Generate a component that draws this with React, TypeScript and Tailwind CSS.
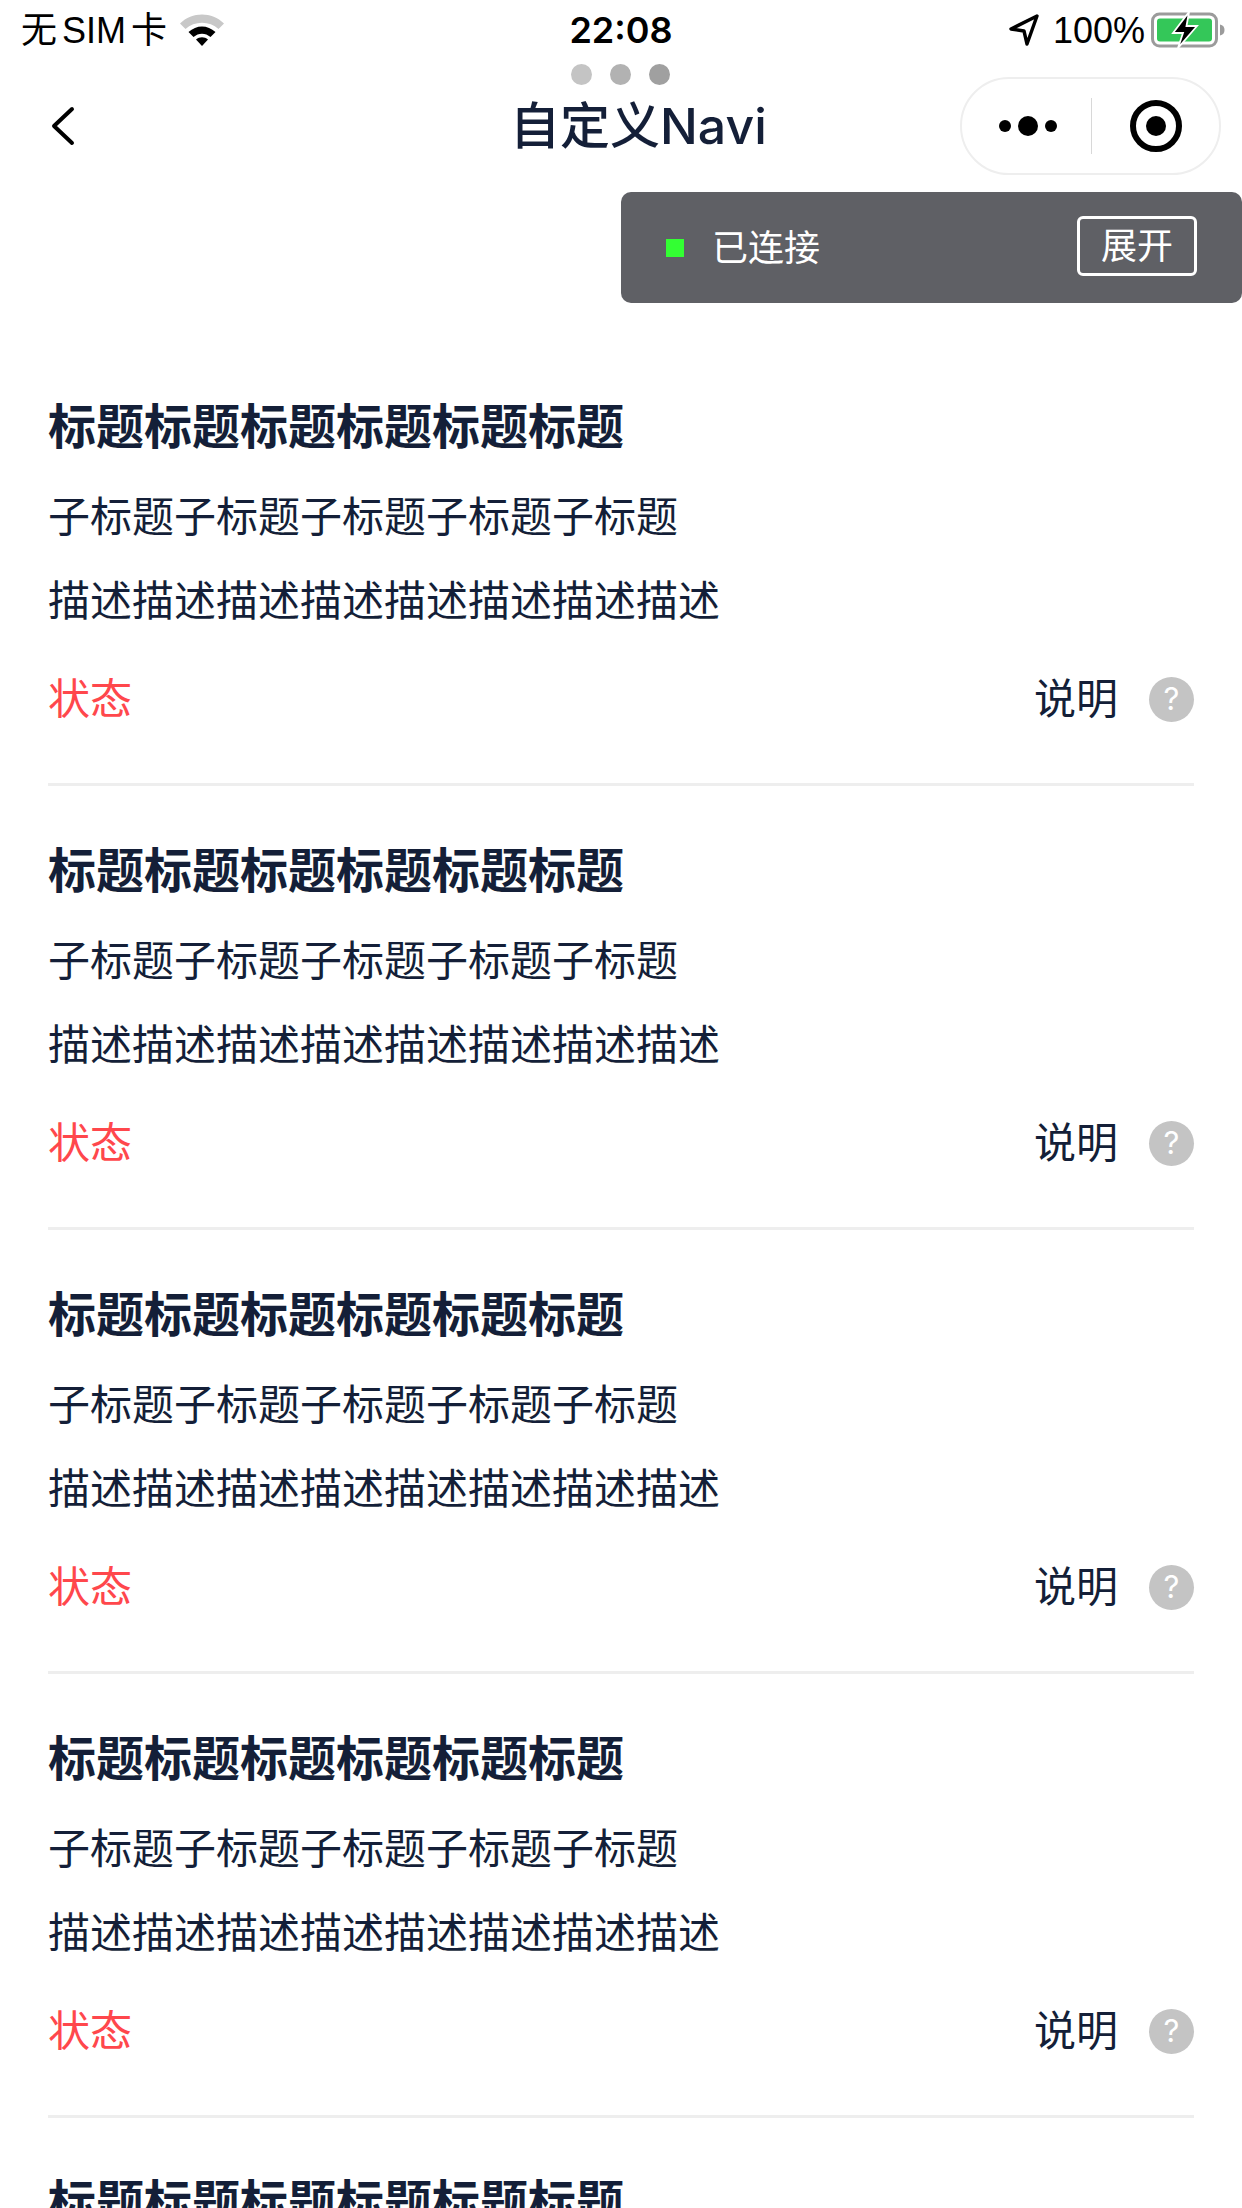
import React from "react";

const fontStack = "font-['Inter','Noto_Sans_CJK_SC',sans-serif]";
const statusFont = "font-['Liberation_Sans','Noto_Sans_CJK_SC',sans-serif]";

function Wifi() {
  return (
    <svg width="46" height="34" viewBox="0 0 46 34">
      <path d="M1 10.5C13 -1.5 33 -1.5 45 10.5L39.5 16C30.5 7.5 15.5 7.5 6.5 16Z" fill="#c8c8c8" />
      <path d="M9.5 19C17.5 11.5 28.5 11.5 36.5 19L31.5 24C26.5 19.5 19.5 19.5 14.5 24Z" fill="#000" />
      <path d="M17 26.5C20.5 23.5 25.5 23.5 29 26.5L23 33Z" fill="#000" />
    </svg>
  );
}

function LocationArrow() {
  return (
    <svg width="32" height="34" viewBox="0 0 32 34" fill="none">
      <path d="M29 3L3 16L16 18L19 31Z" stroke="#000" strokeWidth="3.4" strokeLinejoin="round" />
    </svg>
  );
}

function Battery() {
  return (
    <svg width="74" height="36" viewBox="0 0 74 36">
      <rect x="1.5" y="2" width="64" height="32" rx="7" fill="none" stroke="#9b9b9b" strokeWidth="3" />
      <rect x="6" y="6.5" width="55" height="23" rx="3" fill="#34c759" />
      <path d="M69 12.5C72 13 73.5 15 73.5 18C73.5 21 72 23 69 23.5Z" fill="#9b9b9b" />
      <path d="M38 0L22 21H32L27 36L46 14H35.5Z" fill="#000" stroke="#fff" strokeWidth="1.8" />
    </svg>
  );
}

function Card() {
  return (
    <div className="flex flex-col pt-[55px] pb-[55px] border-b-[3px] border-[#eeeeee]">
      <div className="h-[60px] leading-[60px] text-[48px] font-semibold text-[#141f38]">
        标题标题标题标题标题标题
      </div>
      <div className="mt-[30px] h-[60px] leading-[60px] text-[42px] text-[#141f38]">
        子标题子标题子标题子标题子标题
      </div>
      <div className="mt-[24px] h-[60px] leading-[60px] text-[42px] text-[#141f38]">
        描述描述描述描述描述描述描述描述
      </div>
      <div className="mt-[37px] h-[60px] flex items-center justify-between">
        <span className="text-[42px] text-[#ff474c]">状态</span>
        <div className="flex items-center gap-[31px]">
          <span className="text-[42px] text-[#141f38]">说明</span>
          <div className="mt-[2px] w-[45px] h-[45px] rounded-full bg-[#c4c4c4] flex items-center justify-center text-[31px] text-white">
            ?
          </div>
        </div>
      </div>
    </div>
  );
}

export default function App() {
  return (
    <div className={`relative w-[1242px] h-[2208px] overflow-hidden bg-white ${fontStack}`}>
      {/* status bar */}
      <div className="grid grid-cols-3 items-center h-[60px] px-[21px] text-[36px] text-black">
        <div className="flex items-center gap-[12px]">
          <span className={`${statusFont} mt-[2px] [word-spacing:-5px]`}>无 SIM 卡</span>
          <Wifi />
        </div>
        <div className="text-center font-semibold">22:08</div>
        <div className="flex items-center justify-end mr-[-4px]">
          <LocationArrow />
          <span className={`${statusFont} ml-[13px] mr-[6px] mt-[2px]`}>100%</span>
          <Battery />
        </div>
      </div>

      {/* nav */}
      <div className="flex items-center h-[132px] pl-[50px] pr-[21px]">
        <svg width="26" height="40" viewBox="0 0 26 40" fill="none">
          <path d="M22 3L4 20L22 37" stroke="#000" strokeWidth="4" strokeLinecap="round" strokeLinejoin="round" />
        </svg>
        <div className="ml-[434px] text-[50px] font-medium text-[#141f38]">自定义Navi</div>
        <div className="ml-auto flex items-center w-[261px] h-[98px] rounded-full border-2 border-[#eeeeee]">
          <div className="flex-1 flex items-center justify-center gap-[7px] pl-[3px]">
            <span className="w-[12px] h-[12px] rounded-full bg-black" />
            <span className="w-[20px] h-[20px] rounded-full bg-black" />
            <span className="w-[12px] h-[12px] rounded-full bg-black" />
          </div>
          <div className="w-[1px] h-[56px] bg-[#d8d8d8]" />
          <div className="flex-1 flex items-center justify-center pl-[2px]">
            <div className="w-[52px] h-[52px] rounded-full border-[6px] border-black flex items-center justify-center">
              <div className="w-[20px] h-[20px] rounded-full bg-black" />
            </div>
          </div>
        </div>
      </div>

      {/* loading dots */}
      <div className="absolute top-[64px] left-[571px] flex gap-[18px]">
        <span className="w-[21px] h-[21px] rounded-full bg-[#c4c4c4]" />
        <span className="w-[21px] h-[21px] rounded-full bg-[#b2b2b2]" />
        <span className="w-[21px] h-[21px] rounded-full bg-[#a0a0a0]" />
      </div>

      {/* vconsole panel */}
      <div className="absolute top-[192px] right-0 w-[621px] h-[111px] rounded-[10px] bg-[#5f6065] flex items-center pl-[45px] pr-[45px]">
        <span className="w-[18px] h-[18px] bg-[#33ff33]" />
        <span className="ml-[28px] text-[36px] text-white">已连接</span>
        <div className="ml-auto w-[120px] h-[60px] mt-[-3px] rounded-[6px] border-[3px] border-white flex items-center justify-center text-[36px] text-white">
          展开
        </div>
      </div>

      <div className="h-[150px]" />
      <div className="flex flex-col mx-[48px]">
        <Card />
        <Card />
        <Card />
        <Card />
        <Card />
      </div>
    </div>
  );
}
